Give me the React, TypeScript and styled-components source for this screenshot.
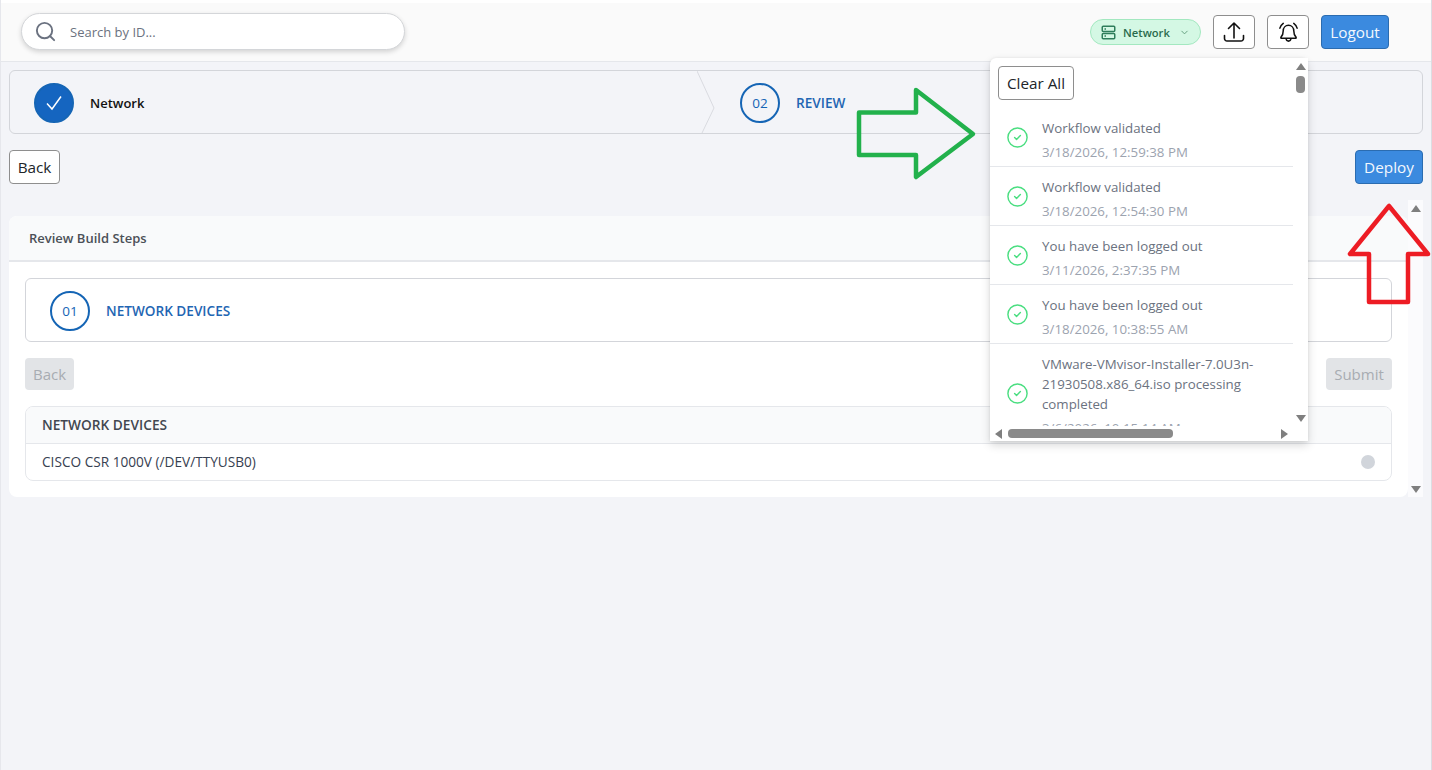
import styled, { createGlobalStyle } from "styled-components";
import { ChevronDown, CircleCheck, Search } from "lucide-react";

const GlobalStyle = createGlobalStyle`
  * {
    box-sizing: border-box;
  }
  html, body {
    margin: 0;
    padding: 0;
    background: #f3f4f8;
  }
  body {
    font-family: "Open Sans", "Noto Sans", sans-serif;
    color: #212529;
  }
`;

const Page = styled.div`
  position: relative;
  width: 1432px;
  height: 770px;
  overflow: hidden;
  background: #f3f4f8;
  &::after {
    content: "";
    position: absolute;
    inset: 0;
    border-left: 1px solid #e6e7ec;
    border-right: 1px solid #dcdde2;
    pointer-events: none;
  }
`;

const Header = styled.header`
  display: flex;
  align-items: center;
  justify-content: space-between;
  height: 62px;
  padding: 0 43px 0 21px;
  background: #fafafa;
  border-top: 3px solid #fff;
  border-bottom: 1px solid #e5e7eb;
`;

const SearchBox = styled.div`
  display: flex;
  align-items: center;
  gap: 13px;
  width: 384px;
  height: 37px;
  margin-top: -1px;
  padding: 0 12px;
  background: #fff;
  border: 1px solid #d4d6d9;
  border-radius: 19px;
  box-shadow: 0 2px 5px rgba(0, 0, 0, 0.16);
  color: #6b7280;
  font-size: 13px;
`;

const HeaderActions = styled.div`
  display: flex;
  align-items: center;
  gap: 12px;
`;

const NetworkPill = styled.div`
  display: flex;
  align-items: center;
  gap: 7px;
  width: 111px;
  height: 26px;
  padding: 0 10px;
  background: #d4f8e4;
  border: 1px solid #a3e8c0;
  border-radius: 13px;
  color: #2a6b4d;
  font-size: 11.2px;
  font-weight: 600;
  white-space: nowrap;
`;

const Button = styled.button<{ $primary?: boolean; $width: number }>`
  display: inline-flex;
  align-items: center;
  justify-content: center;
  width: ${(p) => p.$width}px;
  height: 34px;
  padding: 0;
  font-family: inherit;
  font-size: 15.3px;
  color: ${(p) => (p.$primary ? "#f4f8fd" : "#212529")};
  background: ${(p) => (p.$primary ? "#3b8adf" : "#fff")};
  border: 1px solid ${(p) => (p.$primary ? "#2b6cb0" : "#8e8e8e")};
  border-radius: 4px;
`;

const DisabledButton = styled.button<{ $width: number }>`
  width: ${(p) => p.$width}px;
  height: 32px;
  padding: 0;
  font-family: inherit;
  font-size: 15px;
  color: #a8acb2;
  background: #e2e4e7;
  border: none;
  border-radius: 4px;
`;

const Content = styled.main`
  padding: 8px 9px 0;
`;

const Stepper = styled.div<{ $plain?: boolean }>`
  display: flex;
  align-items: center;
  height: 64px;
  padding: 2px 0 0 24px;
  background: ${(p) => (p.$plain ? "#fff" : "#f3f4f8")};
  border: 1px solid #d3d5da;
  border-radius: 6px;
`;

const Step = styled.div<{ $width?: number }>`
  display: flex;
  align-items: center;
  gap: 16px;
  width: ${(p) => (p.$width ? `${p.$width}px` : "auto")};
`;

const StepCircle = styled.span<{ $done?: boolean }>`
  display: flex;
  align-items: center;
  justify-content: center;
  width: 40px;
  height: 40px;
  flex: none;
  color: ${(p) => (p.$done ? "#fff" : "#1565b5")};
  background: ${(p) => (p.$done ? "#1565c0" : "transparent")};
  border: 2px solid #1565b5;
  border-radius: 50%;
  font-size: 13.5px;
`;

const StepLabel = styled.span<{ $done?: boolean }>`
  color: ${(p) => (p.$done ? "#111" : "#1f66b3")};
  font-size: ${(p) => (p.$done ? "13px" : "13.6px")};
  font-weight: 600;
  white-space: nowrap;
  padding-bottom: ${(p) => (p.$done ? "0" : "2px")};
`;

const ChevronDivider = styled.svg`
  display: block;
  flex: none;
  align-self: flex-start;
  width: 18px;
  height: 62px;
  margin: -2px 25px 0 0;
`;

const ActionRow = styled.div`
  display: flex;
  justify-content: space-between;
  margin-top: 16px;
`;

const ReviewArea = styled.section`
  display: flex;
  height: 297px;
  margin-top: 16px;
`;

const Card = styled.div`
  flex: 1;
  align-self: flex-end;
  height: 281px;
  background: #fff;
  border-radius: 8px;
  overflow: hidden;
`;

const CardHeader = styled.div`
  display: flex;
  align-items: center;
  height: 46px;
  padding-left: 20px;
  background: #f9fafb;
  border-bottom: 2px solid #e5e7eb;
  color: #4b5057;
  font-size: 13px;
  font-weight: 600;
`;

const CardBody = styled.div`
  padding: 16px 16px 0;
`;

const DeviceTable = styled.div`
  margin-top: 16px;
  border: 1px solid #e5e7eb;
  border-radius: 8px;
  overflow: hidden;
`;

const DeviceHead = styled.div`
  display: flex;
  align-items: center;
  height: 37px;
  padding: 0 0 2px 16px;
  background: #f9fafb;
  border-bottom: 1px solid #e5e7eb;
  color: #424750;
  font-size: 13.7px;
  font-weight: 600;
`;

const DeviceRow = styled.div`
  display: flex;
  align-items: center;
  justify-content: space-between;
  height: 36px;
  padding: 0 16px;
  color: #374151;
  font-size: 13.65px;
`;

const DeviceName = styled.span`
  padding-bottom: 2px;
`;

const StatusDot = styled.span`
  width: 14px;
  height: 14px;
  background: #d1d5db;
  border-radius: 50%;
`;

const Track = styled.div<{ $horizontal?: boolean; $tinted?: boolean }>`
  display: flex;
  flex-direction: ${(p) => (p.$horizontal ? "row" : "column")};
  align-items: center;
  justify-content: space-between;
  background: ${(p) => (p.$tinted ? "#fbfbfd" : "#fff")};
  flex: none;
  ${(p) =>
    p.$horizontal
      ? "height: 15px; padding: 0 5px;"
      : "width: 15px; padding: 5px 0 4px;"}
`;

const Triangle = styled.span<{ $dir: "up" | "down" | "left" | "right" }>`
  width: 0;
  height: 0;
  flex: none;
  border-style: solid;
  border-color: transparent;
  ${(p) =>
    p.$dir === "up"
      ? "border-width: 0 5px 7px; border-bottom-color: #7f7f7f;"
      : p.$dir === "down"
      ? "border-width: 7px 5px 0; border-top-color: #7f7f7f;"
      : p.$dir === "left"
      ? "border-width: 5px 7px 5px 0; border-right-color: #7f7f7f;"
      : "border-width: 5px 0 5px 7px; border-left-color: #7f7f7f;"}
`;

const Popover = styled.aside`
  position: absolute;
  top: 58px;
  left: 990px;
  display: grid;
  grid-template-columns: 303px 15px;
  grid-template-rows: 368px 15px;
  width: 318px;
  background: #fff;
  border-radius: 6px 6px 0 0;
  box-shadow: 0 4px 10px rgba(0, 0, 0, 0.16), 0 0 3px rgba(0, 0, 0, 0.08);
`;

const PopoverList = styled.div`
  overflow: hidden;
`;

const ClearBar = styled.div`
  padding: 8px;
`;

const NoticeRow = styled.div`
  display: flex;
  align-items: center;
  gap: 13px;
  padding: 10px 0 4px 16px;
  border-bottom: 1px solid #e5e7eb;
  svg {
    flex: none;
    margin-top: -6px;
  }
`;

const NoticeText = styled.div`
  width: 232px;
  flex: none;
`;

const NoticeTitle = styled.div`
  color: #6b7280;
  font-size: 13.3px;
  line-height: 20px;
`;

const NoticeDate = styled.div`
  margin-top: 4px;
  color: #9ca3af;
  font-size: 13.3px;
  line-height: 20px;
`;

const ThumbV = styled.span`
  width: 9px;
  height: 17px;
  margin: 6px 0 auto;
  background: #8a8a8a;
  border-radius: 4px;
`;

const ThumbH = styled.span`
  width: 165px;
  height: 9px;
  margin: 0 auto 0 6px;
  background: #8a8a8a;
  border-radius: 4px;
`;

const Annotation = styled.svg`
  position: absolute;
  top: 0;
  left: 0;
  width: 1432px;
  height: 770px;
  pointer-events: none;
`;

const notices = [
  { title: "Workflow validated", date: "3/18/2026, 12:59:38 PM" },
  { title: "Workflow validated", date: "3/18/2026, 12:54:30 PM" },
  { title: "You have been logged out", date: "3/11/2026, 2:37:35 PM" },
  { title: "You have been logged out", date: "3/18/2026, 10:38:55 AM" },
  {
    title: "VMware-VMvisor-Installer-7.0U3n-21930508.x86_64.iso processing completed",
    date: "3/6/2026, 10:15:14 AM",
  },
];

const ServerIcon = () => (
  <svg width="15" height="15" viewBox="0 0 15 15" fill="none" stroke="#2e7d5b" strokeWidth="1.5">
    <rect x="1.25" y="1.25" width="12.5" height="5.25" rx="1" />
    <rect x="1.25" y="8.5" width="12.5" height="5.25" rx="1" />
    <path d="M3.5 3.9h1.5M3.5 11.1h1.5" />
  </svg>
);

const UploadIcon = () => (
  <svg width="24" height="24" viewBox="0 0 24 24" fill="none" stroke="#111" strokeWidth="1.6" strokeLinecap="round" strokeLinejoin="round">
    <path d="M12 3v15M6.5 8.5 12 3l5.5 5.5" />
    <path d="M2.5 15.5v3a2.5 2.5 0 0 0 2.5 2.5h14a2.5 2.5 0 0 0 2.5-2.5v-3" />
  </svg>
);

const BellIcon = () => (
  <svg width="23" height="23" viewBox="0 0 24 24" fill="none" stroke="#111" strokeWidth="1.6" strokeLinecap="round" strokeLinejoin="round">
    <path d="M12 4.5c-3.2 0-5.5 2.5-5.5 5.8 0 3.7-1 5.2-2.3 6.5-.4.5-.1 1.2.5 1.2h14.6c.6 0 .9-.7.5-1.2-1.3-1.3-2.3-2.8-2.3-6.5 0-3.3-2.3-5.8-5.5-5.8z" />
    <path d="M9.5 18.5c.2 1.6 1.2 2.5 2.5 2.5s2.3-.9 2.5-2.5" />
    <path d="M3 7.5C3.5 5.5 4.7 3.8 6.5 2.5M21 7.5c-.5-2-1.7-3.7-3.5-5" />
  </svg>
);

export default function App() {
  return (
    <Page>
      <GlobalStyle />
      <Header>
        <SearchBox>
          <Search size={23} strokeWidth={2} />
          Search by ID...
        </SearchBox>
        <HeaderActions>
          <NetworkPill>
            <ServerIcon />
            Network
            <ChevronDown size={11} color="#5f9a7a" style={{ marginLeft: 2 }} />
          </NetworkPill>
          <Button $width={42}>
            <UploadIcon />
          </Button>
          <Button $width={42}>
            <BellIcon />
          </Button>
          <Button $width={68} $primary>
            Logout
          </Button>
        </HeaderActions>
      </Header>
      <Content>
        <Stepper>
          <Step $width={663}>
            <StepCircle $done>
              <svg width="20" height="20" viewBox="0 0 20 20" fill="none" stroke="#fff" strokeWidth="1.5">
                <path d="M3 10.5 8 16 17 3.5" />
              </svg>
            </StepCircle>
            <StepLabel $done>Network</StepLabel>
          </Step>
          <ChevronDivider viewBox="0 0 18 62" fill="none" stroke="#d9dbe0">
            <path d="M0 0 17 37 5 62" />
          </ChevronDivider>
          <Step>
            <StepCircle>02</StepCircle>
            <StepLabel>REVIEW</StepLabel>
          </Step>
        </Stepper>
        <ActionRow>
          <Button $width={51}>Back</Button>
          <Button $width={68} $primary>
            Deploy
          </Button>
        </ActionRow>
        <ReviewArea>
          <Card>
            <CardHeader>Review Build Steps</CardHeader>
            <CardBody>
              <Stepper $plain>
                <Step>
                  <StepCircle>01</StepCircle>
                  <StepLabel>NETWORK DEVICES</StepLabel>
                </Step>
              </Stepper>
              <ActionRow>
                <DisabledButton $width={49}>Back</DisabledButton>
                <DisabledButton $width={66}>Submit</DisabledButton>
              </ActionRow>
              <DeviceTable>
                <DeviceHead>NETWORK DEVICES</DeviceHead>
                <DeviceRow>
                  <DeviceName>CISCO CSR 1000V (/DEV/TTYUSB0)</DeviceName>
                  <StatusDot />
                </DeviceRow>
              </DeviceTable>
            </CardBody>
          </Card>
          <Track $tinted>
            <Triangle $dir="up" />
            <Triangle $dir="down" />
          </Track>
        </ReviewArea>
      </Content>
      <Popover>
        <PopoverList>
          <ClearBar>
            <Button $width={76}>Clear All</Button>
          </ClearBar>
          {notices.map((n, i) => (
            <NoticeRow key={i}>
              <CircleCheck size={23} strokeWidth={1.5} color="#4ade80" />
              <NoticeText>
                <NoticeTitle>{n.title}</NoticeTitle>
                <NoticeDate>{n.date}</NoticeDate>
              </NoticeText>
            </NoticeRow>
          ))}
        </PopoverList>
        <Track>
          <Triangle $dir="up" />
          <ThumbV />
          <Triangle $dir="down" />
        </Track>
        <Track $horizontal>
          <Triangle $dir="left" />
          <ThumbH />
          <Triangle $dir="right" />
        </Track>
      </Popover>
      <Annotation viewBox="0 0 1432 770" fill="none" strokeWidth="4.5" strokeLinejoin="round">
        <path stroke="#22b14c" d="M859 112.5H916V90L973 134 916 177V155H859Z" />
        <path stroke="#ed1c24" d="M1389 206 1350 254H1369V302H1408V254H1428Z" />
      </Annotation>
    </Page>
  );
}
